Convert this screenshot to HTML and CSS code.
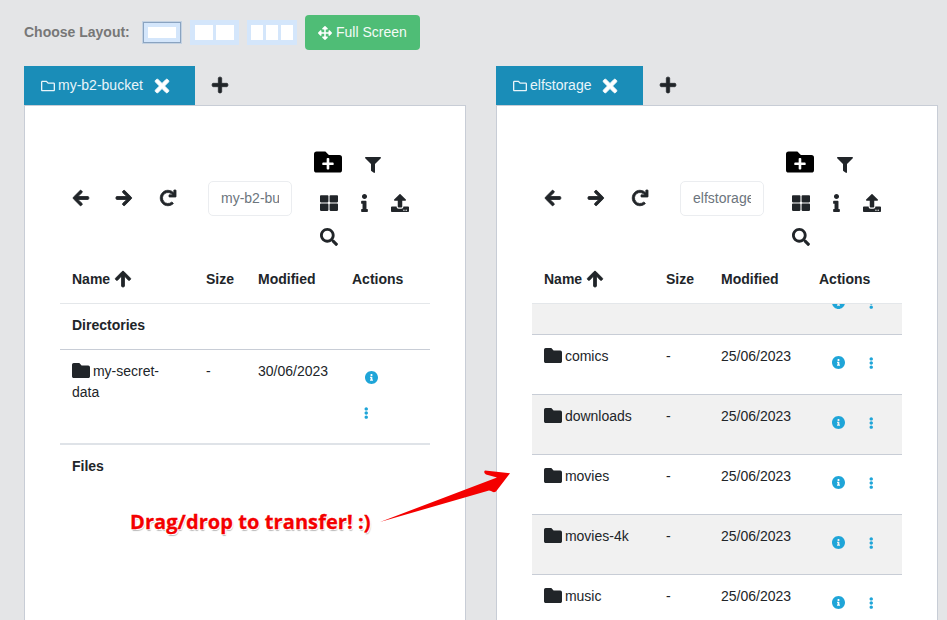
FILE: index.html
```html
<!DOCTYPE html>
<html lang="en">
<head>
<meta charset="utf-8">
<title>Dual pane file browser</title>
<link rel="stylesheet" href="styles.css">
</head>
<body>
<svg class="sprite" aria-hidden="true">
  <symbol id="i-left" viewBox="0 0 448 512"><path d="M257.5 445.1l-22.2 22.2c-9.4 9.4-24.6 9.4-33.9 0L7 273c-9.4-9.4-9.4-24.6 0-33.9L201.4 44.7c9.4-9.4 24.6-9.4 33.9 0l22.2 22.2c9.5 9.5 9.3 25-.4 34.3L136.6 216H424c13.3 0 24 10.7 24 24v32c0 13.3-10.7 24-24 24H136.6l120.5 114.8c9.8 9.3 10 24.8.4 34.3z"/></symbol>
  <symbol id="i-right" viewBox="0 0 448 512"><path d="M190.5 66.9l22.2-22.2c9.4-9.4 24.6-9.4 33.9 0L441 239c9.4 9.4 9.4 24.6 0 33.9L246.6 467.3c-9.4 9.4-24.6 9.4-33.9 0l-22.2-22.2c-9.5-9.5-9.3-25 .4-34.3L311.4 296H24c-13.3 0-24-10.7-24-24v-32c0-13.3 10.7-24 24-24h287.4L190.9 101.2c-9.8-9.3-10-24.8-.4-34.3z"/></symbol>
  <symbol id="i-up" viewBox="0 0 448 512"><path d="M34.9 289.5l-22.2-22.2c-9.4-9.4-9.4-24.6 0-33.9L207 39c9.4-9.4 24.6-9.4 33.9 0l194.3 194.3c9.4 9.4 9.4 24.6 0 33.9L413 289.4c-9.5 9.5-25 9.3-34.3-.4L264 168.6V456c0 13.3-10.7 24-24 24h-32c-13.3 0-24-10.7-24-24V168.6L69.2 289.1c-9.3 9.8-24.8 10-34.3.4z"/></symbol>
  <symbol id="i-redo" viewBox="0 0 512 512"><path d="M500.33 0h-47.41a12 12 0 0 0-12 12.57l4 82.76A247.42 247.42 0 0 0 256 8C119.34 8 7.9 119.53 8 256.19 8.1 393.07 119.1 504 256 504a247.1 247.1 0 0 0 166.18-63.91 12 12 0 0 0 .48-17.43l-34-34a12 12 0 0 0-16.38-.55A176 176 0 1 1 402.1 157.8l-101.53-4.87a12 12 0 0 0-12.57 12v47.41a12 12 0 0 0 12 12h200.33a12 12 0 0 0 12-12V12a12 12 0 0 0-12-12z"/></symbol>
  <symbol id="i-times" viewBox="0 0 352 512"><path d="M242.72 256l100.07-100.07c12.28-12.28 12.28-32.19 0-44.48l-22.24-22.24c-12.28-12.28-32.19-12.28-44.48 0L176 189.28 75.93 89.21c-12.28-12.28-32.19-12.28-44.48 0L9.21 111.45c-12.28 12.28-12.28 32.19 0 44.48L109.28 256 9.21 356.07c-12.28 12.28-12.28 32.19 0 44.48l22.24 22.24c12.28 12.28 32.2 12.28 44.48 0L176 322.72l100.07 100.07c12.28 12.28 32.2 12.28 44.48 0l22.24-22.24c12.28-12.28 12.28-32.19 0-44.48L242.72 256z"/></symbol>
  <symbol id="i-plus" viewBox="0 0 448 512"><path d="M416 208H272V64c0-17.67-14.33-32-32-32h-32c-17.67 0-32 14.33-32 32v144H32c-17.67 0-32 14.33-32 32v32c0 17.67 14.33 32 32 32h144v144c0 17.67 14.33 32 32 32h32c17.67 0 32-14.33 32-32V304h144c17.67 0 32-14.33 32-32v-32c0-17.67-14.33-32-32-32z"/></symbol>
  <symbol id="i-folder" viewBox="0 64 512 384" preserveAspectRatio="none"><path d="M464 128H272l-64-64H48C21.49 64 0 85.49 0 112v288c0 26.51 21.49 48 48 48h416c26.51 0 48-21.49 48-48V176c0-26.51-21.49-48-48-48z"/></symbol>
  <symbol id="i-folder-o" viewBox="0 0 512 512"><path d="M464 128H272l-54.63-54.63c-6-6-14.14-9.37-22.63-9.37H48C21.49 64 0 85.49 0 112v288c0 26.51 21.49 48 48 48h416c26.51 0 48-21.49 48-48V176c0-26.51-21.49-48-48-48zm0 272H48V112h140.12l54.63 54.63c6 6 14.14 9.37 22.63 9.37H464v224z"/></symbol>
  <symbol id="i-folder-plus" viewBox="0 0 512 512"><path d="M464,128H272L208,64H48A48,48,0,0,0,0,112V400a48,48,0,0,0,48,48H464a48,48,0,0,0,48-48V176A48,48,0,0,0,464,128ZM359.5,296a16,16,0,0,1-16,16h-64v64a16,16,0,0,1-16,16h-16a16,16,0,0,1-16-16V312h-64a16,16,0,0,1-16-16V280a16,16,0,0,1,16-16h64V200a16,16,0,0,1,16-16h16a16,16,0,0,1,16,16v64h64a16,16,0,0,1,16,16Z"/></symbol>
  <symbol id="i-filter" viewBox="0 0 512 512"><path d="M487.976 0H24.028C2.71 0-8.047 25.866 7.058 40.971L192 225.941V432c0 7.831 3.821 15.17 10.237 19.662l80 55.98C298.02 518.69 320 507.493 320 487.98V225.941l184.947-184.97C520.021 25.896 509.338 0 487.976 0z"/></symbol>
  <symbol id="i-grid" viewBox="0 0 512 512"><path d="M296 32h192c13.255 0 24 10.745 24 24v160c0 13.255-10.745 24-24 24H296c-13.255 0-24-10.745-24-24V56c0-13.255 10.745-24 24-24zm-80 0H24C10.745 32 0 42.745 0 56v160c0 13.255 10.745 24 24 24h192c13.255 0 24-10.745 24-24V56c0-13.255-10.745-24-24-24zM0 296v160c0 13.255 10.745 24 24 24h192c13.255 0 24-10.745 24-24V296c0-13.255-10.745-24-24-24H24c-13.255 0-24 10.745-24 24zm296 184h192c13.255 0 24-10.745 24-24V296c0-13.255-10.745-24-24-24H296c-13.255 0-24 10.745-24 24v160c0 13.255 10.745 24 24 24z"/></symbol>
  <symbol id="i-info" viewBox="0 0 192 512"><path d="M20 424.229h20V279.771H20c-11.046 0-20-8.954-20-20V212c0-11.046 8.954-20 20-20h112c11.046 0 20 8.954 20 20v212.229h20c11.046 0 20 8.954 20 20V492c0 11.046-8.954 20-20 20H20c-11.046 0-20-8.954-20-20v-47.771c0-11.046 8.954-20 20-20zM96 0C56.235 0 24 32.235 24 72s32.235 72 72 72 72-32.235 72-72S135.764 0 96 0z"/></symbol>
  <symbol id="i-upload" viewBox="0 0 512 512"><path d="M296 384h-80c-13.3 0-24-10.7-24-24V192h-87.7c-17.8 0-26.7-21.5-14.1-34.1L242.3 5.7c7.5-7.5 19.8-7.5 27.3 0l152.2 152.2c12.6 12.6 3.7 34.1-14.1 34.1H320v168c0 13.3-10.7 24-24 24zm216-8v112c0 13.3-10.7 24-24 24H24c-13.3 0-24-10.7-24-24V376c0-13.3 10.7-24 24-24h136v8c0 30.9 25.1 56 56 56h80c30.9 0 56-25.1 56-56v-8h136c13.3 0 24 10.7 24 24zm-124 88c0-11-9-20-20-20s-20 9-20 20 9 20 20 20 20-9 20-20zm64 0c0-11-9-20-20-20s-20 9-20 20 9 20 20 20 20-9 20-20z"/></symbol>
  <symbol id="i-search" viewBox="0 0 512 512"><path d="M505 442.7L405.3 343c-4.5-4.5-10.6-7-17-7H372c27.6-35.3 44-79.7 44-128C416 93.1 322.9 0 208 0S0 93.1 0 208s93.1 208 208 208c48.3 0 92.7-16.4 128-44v16.3c0 6.4 2.5 12.5 7 17l99.7 99.7c9.4 9.4 24.6 9.4 33.9 0l28.3-28.3c9.4-9.4 9.4-24.6.1-34zM208 336c-70.7 0-128-57.2-128-128 0-70.7 57.2-128 128-128 70.7 0 128 57.2 128 128 0 70.7-57.2 128-128 128z"/></symbol>
  <symbol id="i-info-c" viewBox="8 8 496 496"><path d="M256 8C119.043 8 8 119.083 8 256c0 136.997 111.043 248 248 248s248-111.003 248-248C504 119.083 392.957 8 256 8zm0 110c23.196 0 42 18.804 42 42s-18.804 42-42 42-42-18.804-42-42 18.804-42 42-42zm56 254c0 6.627-5.373 12-12 12h-88c-6.627 0-12-5.373-12-12v-24c0-6.627 5.373-12 12-12h12v-64h-12c-6.627 0-12-5.373-12-12v-24c0-6.627 5.373-12 12-12h64c6.627 0 12 5.373 12 12v100h12c6.627 0 12 5.373 12 12v24z"/></symbol>
  <symbol id="i-dots" viewBox="0 0 192 512"><path d="M96 184c39.8 0 72 32.2 72 72s-32.2 72-72 72-72-32.2-72-72 32.2-72 72-72zM24 80c0 39.8 32.2 72 72 72s72-32.2 72-72S135.8 8 96 8 24 40.2 24 80zm0 352c0 39.8 32.2 72 72 72s72-32.2 72-72-32.2-72-72-72-72 32.2-72 72z"/></symbol>
  <symbol id="i-move" viewBox="0 0 512 512"><path d="M352.201 425.775l-79.196 79.196c-9.373 9.373-24.568 9.373-33.941 0l-79.196-79.196c-15.119-15.119-4.411-40.971 16.971-40.97h51.162L228 284H127.196v51.162c0 21.382-25.851 32.09-40.971 16.971L7.029 272.937c-9.373-9.373-9.373-24.569 0-33.941L86.225 159.8c15.119-15.119 40.971-4.411 40.971 16.971V228H228V127.196h-51.23c-21.382 0-32.09-25.851-16.971-40.971l79.196-79.196c9.373-9.373 24.568-9.373 33.941 0l79.196 79.196c15.119 15.119 4.411 40.971-16.971 40.971h-51.162V228h100.804v-51.162c0-21.382 25.851-32.09 40.97-16.971l79.196 79.196c9.373 9.373 9.373 24.569 0 33.941L425.773 352.2c-15.119 15.119-40.971 4.411-40.97-16.971V284H284v100.804h51.23c21.382 0 32.09 25.851 16.971 40.971z"/></symbol>
</svg>

<header class="topbar">
  <span class="topbar-label">Choose Layout:</span>
  <span class="layout layout-one is-active"><i></i></span>
  <span class="layout layout-two"><i></i><i></i></span>
  <span class="layout layout-three"><i></i><i></i><i></i></span>
  <button class="fullscreen" type="button"><svg class="ic-move"><use href="#i-move"/></svg>Full Screen</button>
</header>

<main class="panes">
  <section class="pane pane-left">
    <div class="tabs">
      <div class="tab tab-left"><svg class="ic-tabfolder"><use href="#i-folder-o"/></svg><span>my-b2-bucket</span><svg class="ic-close"><use href="#i-times"/></svg></div>
      <svg class="ic-addtab"><use href="#i-plus"/></svg>
    </div>
    <div class="card">
      <div class="toolbar">
        <span class="nav"><svg class="ic-arrow"><use href="#i-left"/></svg></span>
        <span class="nav"><svg class="ic-arrow"><use href="#i-right"/></svg></span>
        <span class="nav"><svg class="ic-redo"><use href="#i-redo"/></svg></span>
        <input class="path" type="text" value="my-b2-bucket" aria-label="Path">
        <div class="tools">
          <div class="tool-row tool-row-top"><svg class="ic-newfolder"><use href="#i-folder-plus"/></svg><svg class="ic-filter"><use href="#i-filter"/></svg></div>
          <div class="tool-row tool-row-mid"><svg class="ic-tool"><use href="#i-grid"/></svg><svg class="ic-i"><use href="#i-info"/></svg><svg class="ic-tool"><use href="#i-upload"/></svg></div>
          <div class="tool-row tool-row-mid"><svg class="ic-tool"><use href="#i-search"/></svg></div>
        </div>
      </div>
      <table class="grid grid-left">
        <thead>
          <tr><th class="c1">Name <svg class="ic-sort"><use href="#i-up"/></svg></th><th class="c2">Size</th><th class="c3">Modified</th><th class="c4">Actions</th></tr>
        </thead>
        <tbody>
          <tr class="section"><td colspan="4">Directories</td></tr>
          <tr class="row">
            <td><svg class="ic-folder"><use href="#i-folder"/></svg> my-secret-data</td><td>-</td><td>30/06/2023</td>
            <td class="actions"><div class="btns"><span class="btn-info"><svg class="ic-infoc"><use href="#i-info-c"/></svg></span><span class="btn-more"><svg class="ic-dots"><use href="#i-dots"/></svg></span></div></td>
          </tr>
          <tr class="section section-thick"><td colspan="4">Files</td></tr>
        </tbody>
      </table>
    </div>
  </section>

  <section class="pane pane-right">
    <div class="tabs">
      <div class="tab tab-right"><svg class="ic-tabfolder"><use href="#i-folder-o"/></svg><span>elfstorage</span><svg class="ic-close"><use href="#i-times"/></svg></div>
      <svg class="ic-addtab"><use href="#i-plus"/></svg>
    </div>
    <div class="card">
      <div class="toolbar">
        <span class="nav"><svg class="ic-arrow"><use href="#i-left"/></svg></span>
        <span class="nav"><svg class="ic-arrow"><use href="#i-right"/></svg></span>
        <span class="nav"><svg class="ic-redo"><use href="#i-redo"/></svg></span>
        <input class="path" type="text" value="elfstorage" aria-label="Path">
        <div class="tools">
          <div class="tool-row tool-row-top"><svg class="ic-newfolder"><use href="#i-folder-plus"/></svg><svg class="ic-filter"><use href="#i-filter"/></svg></div>
          <div class="tool-row tool-row-mid"><svg class="ic-tool"><use href="#i-grid"/></svg><svg class="ic-i"><use href="#i-info"/></svg><svg class="ic-tool"><use href="#i-upload"/></svg></div>
          <div class="tool-row tool-row-mid"><svg class="ic-tool"><use href="#i-search"/></svg></div>
        </div>
      </div>
      <table class="grid grid-right">
        <thead>
          <tr><th class="c1">Name <svg class="ic-sort"><use href="#i-up"/></svg></th><th class="c2">Size</th><th class="c3">Modified</th><th class="c4">Actions</th></tr>
        </thead>
      </table>
      <div class="scroller">
        <table class="grid grid-right scrolled">
          <tbody>
            <tr class="row stripe"><td class="c1"></td><td class="c2"></td><td class="c3"></td><td class="actions c4"><div class="btns"><span class="btn-info"><svg class="ic-infoc"><use href="#i-info-c"/></svg></span><span class="btn-more"><svg class="ic-dots"><use href="#i-dots"/></svg></span></div></td></tr>
            <tr class="row"><td><svg class="ic-folder"><use href="#i-folder"/></svg> comics</td><td>-</td><td>25/06/2023</td><td class="actions"><div class="btns"><span class="btn-info"><svg class="ic-infoc"><use href="#i-info-c"/></svg></span><span class="btn-more"><svg class="ic-dots"><use href="#i-dots"/></svg></span></div></td></tr>
            <tr class="row stripe"><td><svg class="ic-folder"><use href="#i-folder"/></svg> downloads</td><td>-</td><td>25/06/2023</td><td class="actions"><div class="btns"><span class="btn-info"><svg class="ic-infoc"><use href="#i-info-c"/></svg></span><span class="btn-more"><svg class="ic-dots"><use href="#i-dots"/></svg></span></div></td></tr>
            <tr class="row"><td><svg class="ic-folder"><use href="#i-folder"/></svg> movies</td><td>-</td><td>25/06/2023</td><td class="actions"><div class="btns"><span class="btn-info"><svg class="ic-infoc"><use href="#i-info-c"/></svg></span><span class="btn-more"><svg class="ic-dots"><use href="#i-dots"/></svg></span></div></td></tr>
            <tr class="row stripe"><td><svg class="ic-folder"><use href="#i-folder"/></svg> movies-4k</td><td>-</td><td>25/06/2023</td><td class="actions"><div class="btns"><span class="btn-info"><svg class="ic-infoc"><use href="#i-info-c"/></svg></span><span class="btn-more"><svg class="ic-dots"><use href="#i-dots"/></svg></span></div></td></tr>
            <tr class="row"><td><svg class="ic-folder"><use href="#i-folder"/></svg> music</td><td>-</td><td>25/06/2023</td><td class="actions"><div class="btns"><span class="btn-info"><svg class="ic-infoc"><use href="#i-info-c"/></svg></span><span class="btn-more"><svg class="ic-dots"><use href="#i-dots"/></svg></span></div></td></tr>
          </tbody>
        </table>
      </div>
    </div>
  </section>
</main>

<div class="callout">Drag/drop to transfer! :)</div>
<svg class="callout-arrow" viewBox="0 0 947 620" aria-hidden="true">
  <path d="M380 522L497 477.5L486 474.5Q483 472.5 485 470.5L510 473.3L496 491.5Q493.5 493 491 491L489 490.5Z"/>
</svg>
</body>
</html>
```

FILE: styles.css
```css
* { box-sizing: border-box; }

html, body {
  margin: 0;
  height: 620px;
  overflow: hidden;
}

body {
  background: #e4e5e7;
  color: #212529;
  font-family: "Liberation Sans", Arial, sans-serif;
  font-size: 14px;
  line-height: 21px;
  position: relative;
}

svg { fill: currentColor; display: block; flex: none; overflow: visible; }
symbol { overflow: visible; }
.sprite { display: none; }

/* top bar */
.topbar {
  display: flex;
  align-items: center;
  height: 35px;
  margin: 15px 0 16px 24px;
}
.topbar-label {
  font-weight: 700;
  color: #777;
  width: 119px;
}
.layout {
  display: flex;
  background: #d4e6fb;
  gap: 3px;
}
.layout i { display: block; background: #fff; }
.layout-one {
  width: 38px;
  height: 21px;
  padding: 4px;
  border: 1px solid #8aa3c0;
  outline: 1px solid #c4d2e2;
  outline-offset: 0;
}
.layout-one i { width: 100%; }
.layout-two {
  width: 49px;
  height: 25px;
  padding: 5px;
  margin-left: 9px;
}
.layout-two i { flex: 1; }
.layout-three {
  width: 50px;
  height: 25px;
  padding: 5px 4px;
  margin-left: 8px;
}
.layout-three i { flex: 1; }
.fullscreen {
  display: flex;
  align-items: center;
  gap: 4px;
  width: 115px;
  height: 35px;
  margin-left: 8px;
  padding: 0 0 0 13px;
  border: 0;
  border-radius: 4px;
  background: #4fbd76;
  color: #f4fbf6;
  font: inherit;
}
.ic-move { width: 14px; height: 14px; color: #fff; }

/* panes */
.panes {
  display: flex;
  gap: 30px;
  padding-left: 24px;
}
.pane { width: 442px; flex: none; }

.tabs {
  display: flex;
  align-items: center;
  height: 39px;
}
.tab {
  display: flex;
  align-items: center;
  height: 39px;
  padding: 0 26px 0 17px;
  background: #1a8db8;
  color: #e9f5fa;
}
.ic-tabfolder { width: 14px; height: 14px; margin-right: 3px; }
.ic-close { width: 14px; height: 20px; margin-left: 12px; color: #fff; stroke: currentColor; stroke-width: 20; }
.ic-addtab { width: 16px; height: 18px; margin-left: 17px; margin-top: -2px; stroke: currentColor; stroke-width: 20; }

.card {
  height: 520px;
  background: #fff;
  border: 1px solid #c8cdd6;
  border-bottom: 0;
  padding: 32px 35px 0;
}

/* toolbar */
.toolbar {
  display: flex;
  align-items: center;
  margin-left: -1px;
}
.nav {
  display: flex;
  justify-content: center;
  width: 43.5px;
  flex: none;
}
.ic-arrow, .ic-redo, .ic-sort { stroke: currentColor; stroke-width: 26; }
.ic-arrow { width: 15.75px; height: 18px; }
.ic-redo { width: 16px; height: 16px; }
.path {
  width: 84px;
  height: 35px;
  margin-left: 18.5px;
  padding: 0 12px;
  border: 1px solid #ebedf0;
  border-radius: 5px;
  background: #fff;
  color: #6c757d;
  font: inherit;
  flex: none;
}
.tools {
  margin-left: 22px;
  padding: 8px 0 4px;
}
.tool-row {
  display: flex;
  align-items: center;
  height: 34px;
}
.tool-row-top { gap: 23px; margin-bottom: 6px; }
.tool-row-mid { gap: 23px; padding-left: 6px; }
.ic-newfolder { width: 28px; height: 28px; margin-top: -2px; color: #000; }
.ic-filter { width: 16px; height: 16px; margin-top: 3px; }
.ic-tool { width: 18px; height: 18px; }
.ic-i { width: 7px; height: 18px; }

/* tables */
.grid {
  width: 370px;
  border-collapse: collapse;
  table-layout: fixed;
}
.grid th {
  padding: 11px 12px 13px;
  border-bottom: 1px solid #e4e7ea;
  text-align: left;
  font-weight: 700;
  vertical-align: top;
}
.ic-sort {
  display: inline-block;
  width: 16px;
  height: 18px;
  margin-left: 1px;
  vertical-align: -4px;
}

.grid-left .c1 { width: 134px; }
.grid-left .c2 { width: 52px; }
.grid-left .c3 { width: 94px; }
.grid-left .c4 { width: 90px; }
.grid-right .c1 { width: 122px; }
.grid-right .c2 { width: 55px; }
.grid-right .c3 { width: 98px; }
.grid-right .c4 { width: 95px; }

.section td {
  padding: 11px 12px 13px;
  font-weight: 700;
  border-bottom: 1px solid #c8cdd6;
}
.section-thick td {
  border-top: 2px solid #dfe3e8;
  border-bottom: 0;
}

.row td {
  padding: 11px 12px 13px;
  vertical-align: top;
}
.grid-right .row td { border-bottom: 1px solid #c8cdd6; }
.row .actions { padding: 10px 13px 13px 12px; }
.grid-right .row .actions { padding-bottom: 14px; }
.stripe { background: #f1f1f1; }

.ic-folder {
  display: inline-block;
  width: 18px;
  height: 15px;
  margin-right: -1px;
  vertical-align: -2px;
}

.btns { display: flex; flex-wrap: wrap; }
.btn-info, .btn-more {
  display: flex;
  align-items: center;
  justify-content: center;
  height: 35px;
  color: #1fa5d8;
}
.btn-info { width: 38px; }
.btn-more { width: 28px; }
.ic-infoc { width: 13px; height: 13px; }
.ic-dots { width: 4.5px; height: 12px; }

.scroller {
  height: 316px;
  overflow: hidden;
}
.scrolled { margin-top: -29px; }

/* annotation */
.callout {
  position: absolute;
  left: 130px;
  top: 508px;
  color: #f40000;
  font-family: "Open Sans", sans-serif;
  font-size: 20px;
  letter-spacing: .08px;
  line-height: 28px;
  font-weight: 700;
  -webkit-text-stroke: .3px #f40000;
  text-shadow: 1px 1px 0 #fff, -1px -1px 0 #fff, 1px -1px 0 #fff, -1px 1px 0 #fff, 1px 2px 1px #bbb;
}
.callout-arrow {
  position: absolute;
  left: 0;
  top: 0;
  width: 947px;
  height: 620px;
  fill: #f40000;
  pointer-events: none;
}
```
